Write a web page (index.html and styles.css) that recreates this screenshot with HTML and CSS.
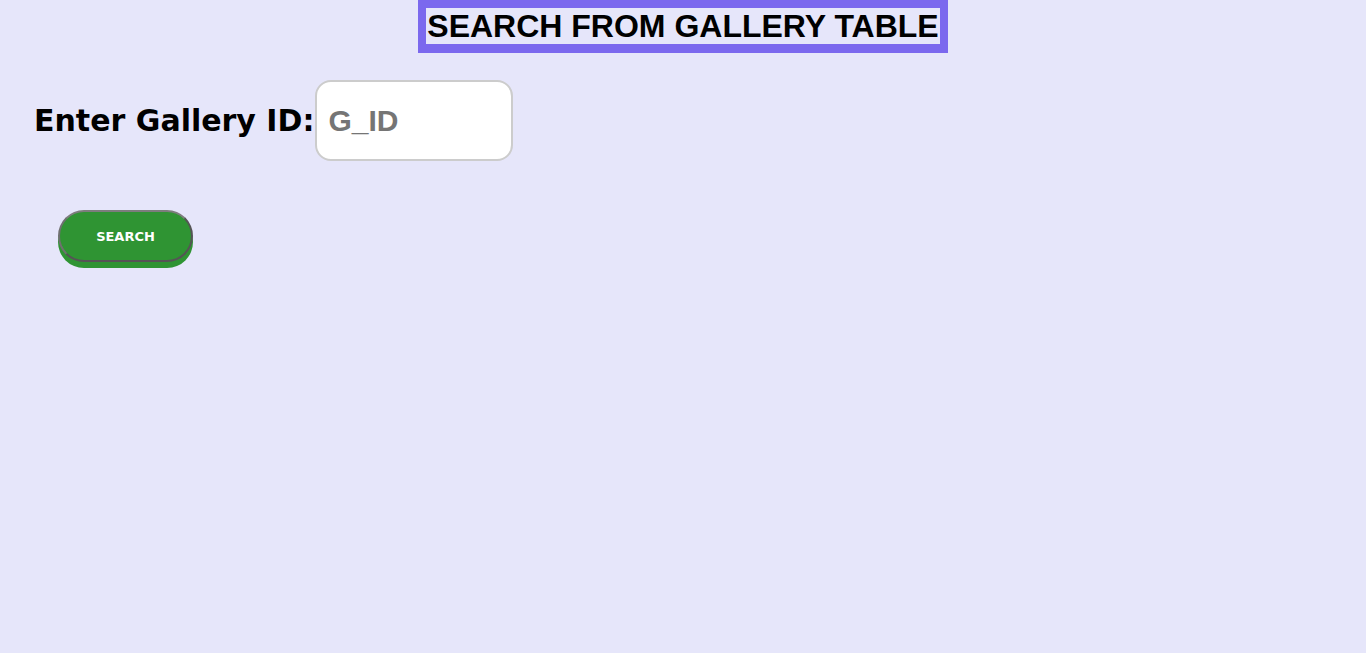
FILE: index.html
```html
<!DOCTYPE html>
<html>
<head>
<meta charset="utf-8">
<title>Search Gallery</title>
<link rel="stylesheet" href="styles.css">
</head>
<body>
<div class="header">
  <h1 class="title">SEARCH FROM GALLERY TABLE</h1>
</div>
<form class="search-form">
  <div class="field-row">
    <label class="field-label" for="gid">Enter Gallery ID:</label><input class="field-input" id="gid" type="text" placeholder="G_ID">
  </div>
  <button class="search-btn" type="button">SEARCH</button>
</form>
</body>
</html>
```

FILE: styles.css
```css
html, body {
  margin: 0;
  padding: 0;
  background: #e6e6fa;
  height: 100%;
}
.header {
  display: flex;
  justify-content: center;
}
.title {
  margin: 0;
  border: 8px solid #7b68ee;
  border-bottom-width: 9px;
  font-family: "Liberation Sans", Arial, sans-serif;
  font-weight: bold;
  font-size: 32px;
  line-height: 36px;
  color: #000;
  padding: 0 1px;
}
.search-form {
  display: flex;
  flex-direction: column;
  align-items: flex-start;
  padding-left: 34px;
  margin-top: 27px;
}
.field-row {
  display: flex;
  align-items: center;
}
.field-label {
  font-family: "DejaVu Sans", Verdana, sans-serif;
  font-weight: bold;
  font-size: 30px;
  color: #000;
  margin-right: 1px;
}
.field-input {
  box-sizing: border-box;
  width: 198px;
  height: 81px;
  border: 2px solid #cccccc;
  border-radius: 16px;
  background: #fff;
  padding: 0 11px;
  font-family: "Liberation Sans", Arial, sans-serif;
  font-weight: bold;
  font-size: 30px;
  color: #333;
  outline: none;
}
.field-input::placeholder {
  color: #757575;
}
.search-btn {
  box-sizing: border-box;
  margin-top: 49px;
  margin-left: 24px;
  width: 135px;
  height: 52px;
  border: 2px solid #555;
  border-top-color: #7d7d7d;
  border-left-color: #707070;
  border-radius: 26px;
  background: #2f9433;
  box-shadow: 0 6px 0 #2f9433;
  color: #fff;
  font-family: "DejaVu Sans", Verdana, sans-serif;
  font-weight: bold;
  font-size: 13px;
  padding: 0;
  cursor: pointer;
}
```
